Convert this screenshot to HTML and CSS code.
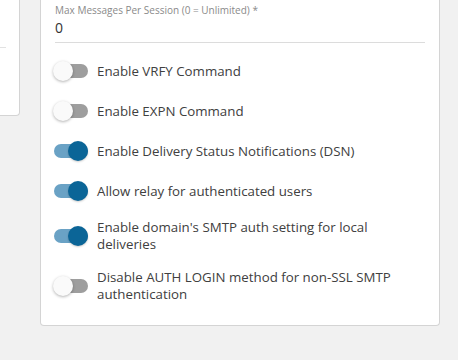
FILE: index.html
```html
<!DOCTYPE html>
<html>
<head>
<meta charset="utf-8">
<link rel="stylesheet" href="styles.css">
</head>
<body>
<div class="page">
  <aside class="side-card">
    <div class="side-top"></div>
  </aside>
  <main class="card">
    <div class="field">
      <div class="field-label">Max Messages Per Session (0 = Unlimited) *</div>
      <div class="field-value">0</div>
    </div>
    <ul class="options">
      <li class="option"><span class="switch"><span class="track"></span><span class="thumb"></span></span><span class="opt-text">Enable VRFY Command</span></li>
      <li class="option"><span class="switch"><span class="track"></span><span class="thumb"></span></span><span class="opt-text">Enable EXPN Command</span></li>
      <li class="option"><span class="switch on"><span class="track"></span><span class="thumb"></span></span><span class="opt-text">Enable Delivery Status Notifications (DSN)</span></li>
      <li class="option"><span class="switch on"><span class="track"></span><span class="thumb"></span></span><span class="opt-text">Allow relay for authenticated users</span></li>
      <li class="option"><span class="switch on"><span class="track"></span><span class="thumb"></span></span><span class="opt-text">Enable domain's SMTP auth setting for local deliveries</span></li>
      <li class="option"><span class="switch"><span class="track"></span><span class="thumb"></span></span><span class="opt-text">Disable AUTH LOGIN method for non-SSL SMTP authentication</span></li>
    </ul>
  </main>
</div>
</body>
</html>
```
FILE: styles.css
```css
* { box-sizing: border-box; }
html, body { margin: 0; padding: 0; }
body {
  background: #f1f1f1;
  font-family: "Open Sans", "Noto Sans", sans-serif;
  color: #333;
  width: 458px;
  height: 360px;
  overflow: hidden;
}
.page {
  display: flex;
  align-items: flex-start;
  gap: 20px;
}
.side-card {
  width: 20px;
  height: 116px;
  background: #fff;
  border-right: 1px solid #d4d4d4;
  border-bottom: 1px solid #d4d4d4;
  border-bottom-right-radius: 4px;
  flex: none;
}
.side-top {
  height: 48px;
  width: 6px;
  border-bottom: 1px solid #e2e2e2;
}
.card {
  width: 400px;
  flex: none;
  background: #fff;
  border: 1px solid #d4d4d4;
  border-top: none;
  border-radius: 0 0 4px 4px;
  padding: 2px 14px 22px 14px;
}
.field {
  border-bottom: 1px solid #dcdcdc;
  padding-bottom: 4px;
  margin-bottom: 16px;
}
.field-label {
  font-size: 10px;
  line-height: 16px;
  color: #8a8a8a;
}
.field-value {
  font-size: 14px;
  line-height: 20px;
  color: #333;
}
.options {
  list-style: none;
  margin: 0;
  padding: 0;
}
.option {
  display: flex;
  align-items: center;
  gap: 8px;
  min-height: 24px;
  margin-bottom: 16px;
}
.option:last-child { margin-bottom: 0; }
.switch {
  position: relative;
  width: 36px;
  height: 20px;
  flex: none;
  margin-left: -2px;
  display: flex;
  align-items: center;
}
.track {
  width: 34px;
  height: 14px;
  margin-left: 1px;
  border-radius: 7px;
  background: #9e9e9e;
}
.thumb {
  position: absolute;
  top: 0;
  left: 0;
  width: 20px;
  height: 20px;
  border-radius: 50%;
  background: #fafafa;
  box-shadow: 0 1px 3px rgba(0,0,0,0.3);
}
.switch.on .track { background: #6aa2c5; }
.switch.on .thumb {
  left: 15px;
  background: #0b6597;
  box-shadow: 0 1px 2px rgba(0,0,0,0.2);
}
.opt-text {
  font-size: 13.3px;
  line-height: 17px;
  color: #404040;
}
```
